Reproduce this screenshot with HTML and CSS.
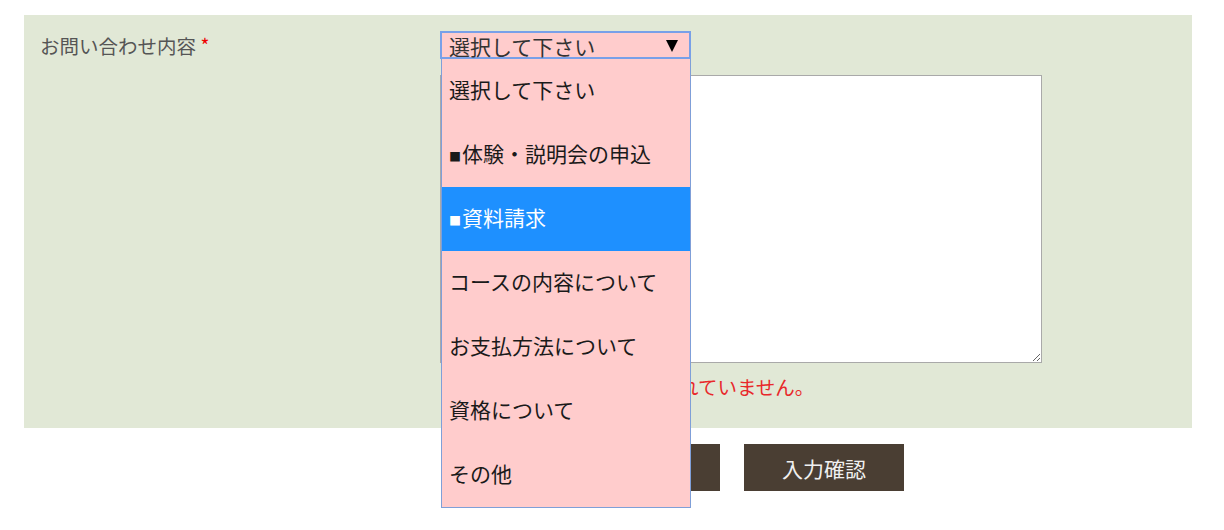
FILE: index.html
```html
<!DOCTYPE html>
<html lang="ja">
<head>
<meta charset="utf-8">
<title>お問い合わせ</title>
<link rel="stylesheet" href="styles.css">
</head>
<body>
<div class="page">
  <form class="form">
    <div class="panel">
      <div class="label">お問い合わせ内容 <span class="req">*</span></div>
      <div class="field">
        <div class="select-wrap">
          <div class="select">
            <span class="select-text">選択して下さい</span>
            <span class="arrow"></span>
          </div>
          <ul class="dropdown">
            <li class="opt">選択して下さい</li>
            <li class="opt"><span class="sq">■</span>体験・説明会の申込</li>
            <li class="opt active"><span class="sq">■</span>資料請求</li>
            <li class="opt">コースの内容について</li>
            <li class="opt">お支払方法について</li>
            <li class="opt">資格について</li>
            <li class="opt">その他</li>
          </ul>
        </div>
        <textarea class="textarea"></textarea>
        <p class="error">お問い合わせ内容が選択されていません。</p>
      </div>
    </div>
    <div class="actions">
      <button type="button" class="btn">リセット</button>
      <button type="button" class="btn">入力確認</button>
    </div>
  </form>
</div>
</body>
</html>
```
FILE: styles.css
```css
* { box-sizing: border-box; }
html, body { margin: 0; padding: 0; background: #fff; }
body {
  font-family: "Noto Sans CJK JP", "Noto Sans", sans-serif;
  color: #333;
}
.page { padding: 15px 32px 0 24px; min-height: 530px; }
.panel {
  background: #e1e8d6;
  display: grid;
  grid-template-columns: 400px 1fr;
  padding: 16px 16px 16px 16px;
}
.label {
  font-size: 19.5px;
  line-height: 28px;
  color: #555;
}
.req { color: #e00; font-size: 19px; vertical-align: 1px; }
.field { display: flex; flex-direction: column; align-items: flex-start; }
.select-wrap { position: relative; }
.select {
  width: 251px;
  height: 28px;
  border: 2px solid #78a0e8;
  background: #ffcccc;
  display: flex;
  align-items: center;
  justify-content: space-between;
  padding: 0 11px 0 7px;
}
.select-text {
  font-size: 21px;
  line-height: 24px;
  color: #333;
  margin-top: 2px;
}
.arrow {
  width: 0;
  height: 0;
  border-left: 6px solid transparent;
  border-right: 6px solid transparent;
  border-top: 12px solid #000;
  margin-top: 2px;
}
.dropdown {
  position: absolute;
  left: 1px;
  top: 28px;
  width: 250px;
  margin: 0;
  padding: 0;
  list-style: none;
  background: #ffcccc;
  border: 1px solid #7f9fd8;
  border-top: none;
  z-index: 10;
}
.opt {
  height: 64px;
  line-height: 60px;
  padding-left: 7px;
  font-size: 21px;
  color: #1a1a1a;
  white-space: nowrap;
}
.sq { font-size: 12px; margin-right: 1px; }
.opt.active { background: #1e90ff; color: #fff; }
.textarea {
  margin-top: 16px;
  width: 602px;
  height: 288px;
  border: 1px solid #a9a9a9;
  background: #fff;
  display: block;
}
.error {
  margin: 10px 0 0 0;
  font-size: 19.5px;
  line-height: 28px;
  color: #e8282b;
  height: 39px;
  padding-left: 5px;
}
.actions {
  display: flex;
  gap: 24px;
  padding: 16px 0 0 536px;
}
.btn {
  width: 160px;
  height: 47px;
  background: #4a3e33;
  color: #f0f0f0;
  border: none;
  font-family: "Noto Sans CJK JP", sans-serif;
  font-size: 21px;
  padding: 0;
}
```
